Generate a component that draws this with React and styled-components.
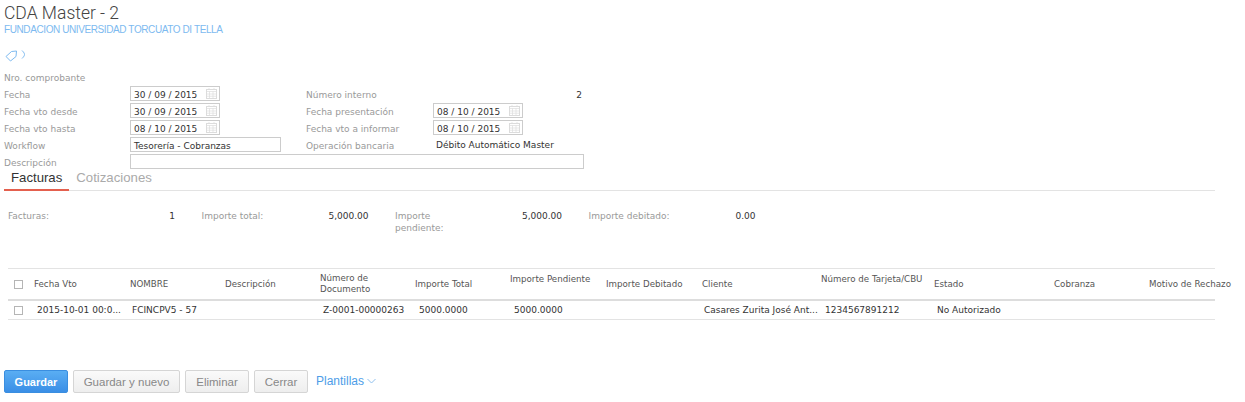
import React from 'react';
import styled, { createGlobalStyle } from 'styled-components';

const GlobalStyle = createGlobalStyle`
  html, body {
    margin: 0;
    padding: 0;
    background: #fff;
  }
  body {
    font-family: "DejaVu Sans", Verdana, sans-serif;
    font-size: 9px;
    color: #333;
  }
`;

const Page = styled.div`
  width: 1245px;
  height: 402px;
  overflow: hidden;
  padding: 0 30px 0 4px;
  box-sizing: border-box;
`;

const Title = styled.h1`
  margin: 0;
  padding-top: 2px;
  font-family: Roboto, sans-serif;
  font-weight: 300;
  font-size: 17.5px;
  line-height: 22px;
  color: #444;
`;

const Subtitle = styled.div`
  font-family: "Liberation Sans", Arial, sans-serif;
  font-size: 10px;
  letter-spacing: -0.4px;
  line-height: 12px;
  color: #7dbaf0;
`;

const TagRow = styled.div`
  display: flex;
  align-items: flex-start;
  gap: 3px;
  height: 18px;
  margin-top: 14px;
  padding-left: 1px;
`;

const Form = styled.div`
  display: grid;
  grid-template-columns: 126px 176px 127px 151px;
  grid-auto-rows: 17px;
`;

const Label = styled.div`
  display: flex;
  align-items: center;
  padding-top: 3px;
  color: #999;
  white-space: nowrap;
`;

const Value = styled.div`
  display: flex;
  align-items: center;
  color: #333;
  padding-left: ${(p) => p.$indent || 0}px;
  padding-top: ${(p) => p.$top || 0}px;
  padding-right: ${(p) => (p.$end ? 2 : 0)}px;
  justify-content: ${(p) => (p.$end ? 'flex-end' : 'flex-start')};
`;

const Field = styled.div`
  grid-column: ${(p) => p.$span || 'auto'};
  display: flex;
  align-items: center;
`;

const InputBox = styled.div`
  display: flex;
  align-items: center;
  justify-content: space-between;
  box-sizing: border-box;
  width: ${(p) => p.$width}px;
  height: 15px;
  padding: 0 2px 0 3px;
  border: 1px solid #ccc;
  color: #333;
  white-space: nowrap;
`;

const BoxText = styled.span`
  padding-top: 2px;
`;

const Tabs = styled.div`
  display: flex;
  height: 20px;
  border-bottom: 1px solid #e3e3e3;
`;

const Tab = styled.div`
  box-sizing: border-box;
  height: 21px;
  padding: 0 7px;
  font-family: "Liberation Sans", Arial, sans-serif;
  font-size: 13.2px;
  line-height: 15px;
  color: ${(p) => (p.$active ? '#333' : '#aaa')};
  border-bottom: ${(p) => (p.$active ? '2px solid #e4604e' : '0')};
`;

const Summary = styled.div`
  display: flex;
  padding: 19px 0 0 4px;
  height: 77px;
  box-sizing: border-box;
`;

const SummaryCell = styled.div`
  display: flex;
  justify-content: space-between;
  width: 167px;
  margin-right: 26.5px;
  line-height: 12px;
`;

const SummaryLabel = styled.div`
  color: #999;
  width: 86px;
`;

const SummaryValue = styled.div`
  color: #333;
`;

const Table = styled.div`
  margin-left: 4px;
`;

const Row = styled.div`
  display: grid;
  grid-template-columns: 26px 96px 95px 95px 95px 95px 96px 96px 119px 113px 120px 95px 1fr;
  align-items: center;
  box-sizing: border-box;
  height: ${(p) => p.$height}px;
  border-bottom: ${(p) => (p.$head ? '2px solid #ddd' : '1px solid #e3e3e3')};
  border-top: ${(p) => (p.$head ? '1px solid #e3e3e3' : '0')};
`;

const HeadCell = styled.div`
  color: #555;
  font-size: 8.7px;
  line-height: 11px;
  white-space: nowrap;
  padding-bottom: ${(p) => (p.$raised ? 10 : 0)}px;
`;

const BodyCell = styled.div`
  color: #333;
  padding-left: ${(p) => p.$indent}px;
  white-space: nowrap;
  overflow: hidden;
  text-overflow: ellipsis;
`;

const CheckCell = styled.div`
  padding-left: 6px;
  display: flex;
`;

const Check = styled.span`
  display: block;
  box-sizing: border-box;
  width: 9px;
  height: 9px;
  border: 1px solid #b5b5b5;
  background: #fff;
`;

const Actions = styled.div`
  display: flex;
  align-items: center;
  gap: 5px;
  margin-top: 50px;
`;

const Button = styled.button`
  box-sizing: border-box;
  height: 23px;
  width: ${(p) => p.$width}px;
  padding: 0;
  border-radius: 2px;
  font-family: "Liberation Sans", Arial, sans-serif;
  font-size: ${(p) => (p.$primary ? 11 : 11.5)}px;
  font-weight: ${(p) => (p.$primary ? 700 : 400)};
  color: ${(p) => (p.$primary ? '#fff' : '#888')};
  border: 1px solid ${(p) => (p.$primary ? '#3a8ee0' : '#d5d5d5')};
  background: ${(p) => (p.$primary ? 'linear-gradient(#5aaef3, #3a8ee6)' : 'linear-gradient(#fafafa, #eee)')};
`;

const TemplatesLink = styled.div`
  display: flex;
  align-items: center;
  gap: 3px;
  margin-left: 3px;
  margin-top: -1px;
  font-family: "Liberation Sans", Arial, sans-serif;
  font-size: 12px;
  color: #4d9de8;
`;

const CalendarIcon = () => (
  <svg width="11" height="11" viewBox="0 0 11 11" fill="none" stroke="#dcdcdc">
    <rect x="0.5" y="1.5" width="10" height="9" />
    <path d="M0.5 3.5h10M3.5 3.5v7M7 3.5v7M0.5 6h10M0.5 8.2h10M3 0v2M8 0v2" strokeWidth="0.7" />
  </svg>
);

const TagIcon = () => (
  <svg width="13" height="12" viewBox="0 0 13 12" fill="none" stroke="#7dbaf0">
    <path d="M1 6.5 6.5 1.5 11.5 1 11 6.5 5.5 11z" strokeLinejoin="round" />
  </svg>
);

const ChevronRight = () => (
  <svg width="5" height="9" viewBox="0 0 5 9" fill="none" stroke="#7dbaf0">
    <path d="M1 .5C3 2.5 3.5 3.5 3.5 4.5S3 6.5 1 8.5" />
  </svg>
);

const ChevronDown = () => (
  <svg width="9" height="6" viewBox="0 0 9 6" fill="none" stroke="#8fc0ee">
    <path d="M.5 1 4.5 5 8.5 1" />
  </svg>
);

const DateInput = ({ value }) => (
  <InputBox $width={90}>
    <BoxText>{value}</BoxText>
    <CalendarIcon />
  </InputBox>
);

const columns = [
  { title: 'Fecha Vto' },
  { title: 'NOMBRE' },
  { title: 'Descripción' },
  { title: <>Número de<br />Documento</> },
  { title: 'Importe Total' },
  { title: 'Importe Pendiente', raised: true },
  { title: 'Importe Debitado' },
  { title: 'Cliente' },
  { title: 'Número de Tarjeta/CBU', raised: true },
  { title: 'Estado' },
  { title: 'Cobranza' },
  { title: 'Motivo de Rechazo' },
];

const cells = [
  { text: '2015-10-01 00:0...', indent: 3 },
  { text: 'FCINCPV5 - 57', indent: 2 },
  { text: '', indent: 3 },
  { text: 'Z-0001-00000263', indent: 3 },
  { text: '5000.0000', indent: 4 },
  { text: '5000.0000', indent: 4 },
  { text: '', indent: 3 },
  { text: 'Casares Zurita José Ant...', indent: 2 },
  { text: '1234567891212', indent: 4 },
  { text: 'No Autorizado', indent: 3 },
  { text: '', indent: 3 },
  { text: '', indent: 3 },
];

const totals = [
  ['Facturas:', '1'],
  ['Importe total:', '5,000.00'],
  ['Importe pendiente:', '5,000.00'],
  ['Importe debitado:', '0.00'],
];

const App = () => (
  <Page>
    <GlobalStyle />
    <Title>CDA Master - 2</Title>
    <Subtitle>FUNDACION UNIVERSIDAD TORCUATO DI TELLA</Subtitle>
    <TagRow>
      <TagIcon />
      <ChevronRight />
    </TagRow>
    <Form>
      <Label>Nro. comprobante</Label>
      <Value />
      <Value />
      <Value />

      <Label>Fecha</Label>
      <Field><DateInput value="30 / 09 / 2015" /></Field>
      <Label>Número interno</Label>
      <Value $end $top={2}>2</Value>

      <Label>Fecha vto desde</Label>
      <Field><DateInput value="30 / 09 / 2015" /></Field>
      <Label>Fecha presentación</Label>
      <Field><DateInput value="08 / 10 / 2015" /></Field>

      <Label>Fecha vto hasta</Label>
      <Field><DateInput value="08 / 10 / 2015" /></Field>
      <Label>Fecha vto a informar</Label>
      <Field><DateInput value="08 / 10 / 2015" /></Field>

      <Label>Workflow</Label>
      <Field><InputBox $width={151}><BoxText>Tesorería - Cobranzas</BoxText></InputBox></Field>
      <Label>Operación bancaria</Label>
      <Value $indent={3}>Débito Automático Master</Value>

      <Label>Descripción</Label>
      <Field $span="2 / span 3"><InputBox $width={454} /></Field>
    </Form>
    <Tabs>
      <Tab $active>Facturas</Tab>
      <Tab>Cotizaciones</Tab>
    </Tabs>
    <Summary>
      {totals.map(([label, value]) => (
        <SummaryCell key={label}>
          <SummaryLabel>{label}</SummaryLabel>
          <SummaryValue>{value}</SummaryValue>
        </SummaryCell>
      ))}
    </Summary>
    <Table>
      <Row $head $height={33}>
        <CheckCell><Check /></CheckCell>
        {columns.map((col, i) => (
          <HeadCell key={i} $raised={col.raised}>{col.title}</HeadCell>
        ))}
      </Row>
      <Row $height={19}>
        <CheckCell><Check /></CheckCell>
        {cells.map((cell, i) => (
          <BodyCell key={i} $indent={cell.indent}>{cell.text}</BodyCell>
        ))}
      </Row>
    </Table>
    <Actions>
      <Button $primary $width={64}>Guardar</Button>
      <Button $width={107}>Guardar y nuevo</Button>
      <Button $width={64}>Eliminar</Button>
      <Button $width={54}>Cerrar</Button>
      <TemplatesLink>Plantillas<ChevronDown /></TemplatesLink>
    </Actions>
  </Page>
);

export default App;
